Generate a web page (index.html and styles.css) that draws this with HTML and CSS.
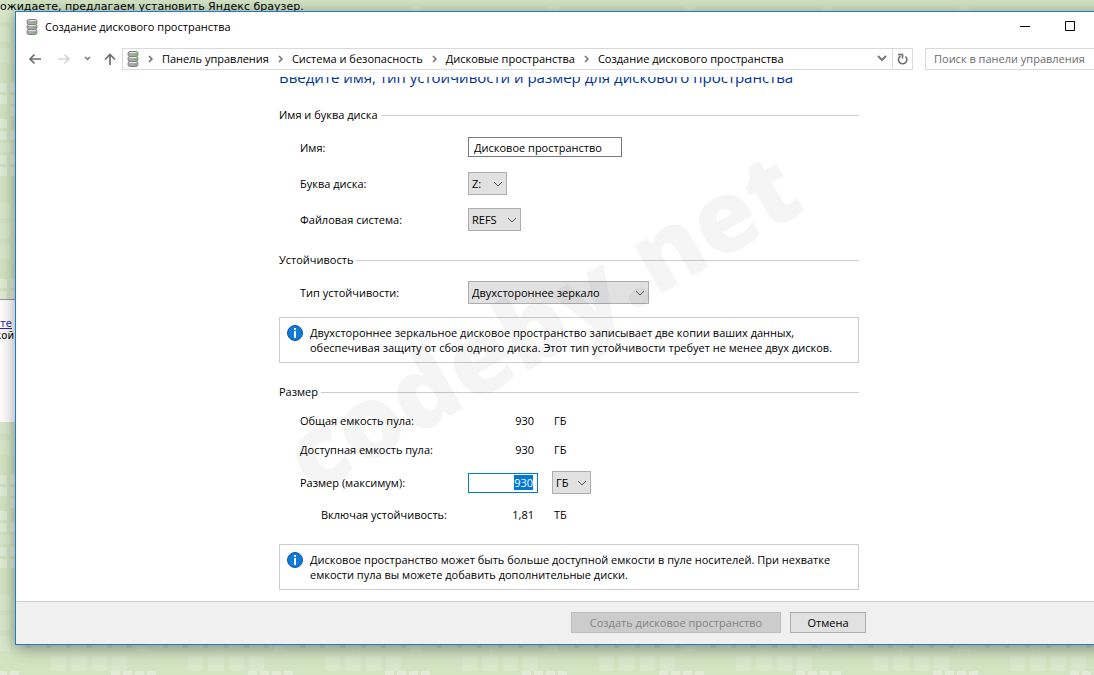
FILE: index.html
```html
<!DOCTYPE html>
<html lang="ru">
<head>
    <meta charset="UTF-8">
    <meta name="viewport" content="width=device-width, initial-scale=1.0">
    <title>Создание дискового пространства</title>
    <link rel="stylesheet" href="styles.css">
</head>
<body>
    <!-- Page behind the window -->
    <svg class="wallpaper" aria-hidden="true">
        <defs>
            <pattern id="tiles" x="0" y="83" width="137" height="196" patternUnits="userSpaceOnUse">
                <rect width="137" height="196" fill="#d3e4c3"/>
                <g fill="#e0ecd6">
                    <path d="M0 0h7v9H0zM10 0h9v9h-9zM111 0h9v9h-9zM123 0h9v9h-9zM135 0h2v9h-2z"/>
                    <path d="M0 12h7v9H0zM10 12h9v9h-9zM10 24h9v9h-9zM0 36h7v9H0zM0 48h7v9H0zM10 48h9v9h-9z"/>
                    <path d="M0 72h7v9H0zM10 72h9v9h-9zM0 84h7v9H0zM10 84h9v9h-9z"/>
                </g>
                <g fill="#d9e8cb">
                    <path d="M0 60h19v9H0zM0 120h10v15H0zM0 140h10v15H0zM0 161h10v15H0z"/>
                    <path d="M51 181h15v15H51zM71 181h16v15H71zM92 181h15v15H92zM112 181h15v15h-15zM79 170h1v26h-1z"/>
                </g>
                <path d="M26 170h5v3h-5zM46 170h5v3h-5zM66 170h5v3h-5zM87 170h5v3h-5zM107 170h5v3h-5zM127 170h5v3h-5z" fill="#c6d8b6"/>
            </pattern>
        </defs>
        <rect width="100%" height="100%" fill="url(#tiles)"/>
    </svg>
    <p class="page-notice">ожидаете, предлагаем установить Яндекс браузер.</p>
    <div class="page-card">
        <a href="#">сте</a>
        <span>кой</span>
    </div>

    <main class="window">
        <header class="titlebar">
            <svg class="disk-icon" width="12" height="16" viewBox="0 0 12 16" aria-hidden="true">
                <g fill="#a9a9a9" stroke="#808080">
                    <rect x="1" y="10.500" width="10" height="5" rx="2"/>
                    <rect x="1" y="5.500" width="10" height="5" rx="2"/>
                    <rect x="1" y="0.500" width="10" height="5" rx="2"/>
                </g>
                <path d="M2.500 1.500h7M2.500 6.500h7M2.500 11.500h7" stroke="#e8e8e8"/>
                <path d="M7.500 3.500h2M7.500 8.500h2M7.500 13.500h2" stroke="#4fc03a"/>
            </svg>
            <h1>Создание дискового пространства</h1>
            <button class="caption-btn" type="button" aria-label="Свернуть">
                <svg width="10" height="10" viewBox="0 0 10 10"><path d="M0 5.500h10" stroke="#000"/></svg>
            </button>
            <button class="caption-btn" type="button" aria-label="Развернуть">
                <svg width="10" height="10" viewBox="0 0 10 10"><path d="M.5.5h9v9h-9z" fill="none" stroke="#000"/></svg>
            </button>
        </header>

        <nav class="navbar">
            <div class="nav-buttons">
                <button type="button" aria-label="Назад">
                    <svg width="14" height="12" viewBox="0 0 14 12"><path d="M13 6H2M6.500 1.500L2 6l4.500 4.500" fill="none" stroke="#6e6e6e" stroke-width="1.700"/></svg>
                </button>
                <button type="button" aria-label="Вперед" disabled>
                    <svg width="14" height="12" viewBox="0 0 14 12"><path d="M1 6h11M7.500 1.500L12 6l-4.500 4.500" fill="none" stroke="#d6d6d6" stroke-width="1.700"/></svg>
                </button>
                <button type="button" aria-label="Последние расположения">
                    <svg width="7" height="12" viewBox="0 0 7 12"><path d="M1 4l2.500 2.500L6 4" fill="none" stroke="#7a7a7a" stroke-width="1.500"/></svg>
                </button>
                <button type="button" aria-label="Вверх">
                    <svg width="12" height="12" viewBox="0 0 12 12"><path d="M6 12V1.500M1 6.500l5-5 5 5" fill="none" stroke="#6e6e6e" stroke-width="1.700"/></svg>
                </button>
            </div>
            <div class="address">
                <svg class="disk-icon" width="12" height="16" viewBox="0 0 12 16" aria-hidden="true">
                    <g fill="#a9a9a9" stroke="#808080">
                        <rect x="1" y="10.500" width="10" height="5" rx="2"/>
                        <rect x="1" y="5.500" width="10" height="5" rx="2"/>
                        <rect x="1" y="0.500" width="10" height="5" rx="2"/>
                    </g>
                    <path d="M2.500 1.500h7M2.500 6.500h7M2.500 11.500h7" stroke="#e8e8e8"/>
                    <path d="M7.500 3.500h2M7.500 8.500h2M7.500 13.500h2" stroke="#4fc03a"/>
                </svg>
                <ol class="crumbs">
                    <li><svg width="5" height="8" viewBox="0 0 5 8"><path d="M1 1l3 3-3 3" fill="none" stroke="#6e6e6e" stroke-width="1.500"/></svg><a href="#">Панель управления</a></li>
                    <li><svg width="5" height="8" viewBox="0 0 5 8"><path d="M1 1l3 3-3 3" fill="none" stroke="#6e6e6e" stroke-width="1.500"/></svg><a href="#">Система и безопасность</a></li>
                    <li><svg width="5" height="8" viewBox="0 0 5 8"><path d="M1 1l3 3-3 3" fill="none" stroke="#6e6e6e" stroke-width="1.500"/></svg><a href="#">Дисковые пространства</a></li>
                    <li><svg width="5" height="8" viewBox="0 0 5 8"><path d="M1 1l3 3-3 3" fill="none" stroke="#6e6e6e" stroke-width="1.500"/></svg><a href="#">Создание дискового пространства</a></li>
                </ol>
                <button class="address-btn" type="button" aria-label="Предыдущие расположения">
                    <svg width="10" height="7" viewBox="0 0 10 7"><path d="M1 1l4 4 4-4" fill="none" stroke="#7a7a7a" stroke-width="2"/></svg>
                </button>
                <button class="address-btn refresh" type="button" aria-label="Обновить">
                    <svg width="11" height="12" viewBox="0 0 11 12"><path d="M8.500 3.500a4.200 4.200 0 1 1-5 -.5M1 1.500h4.500v4" fill="none" stroke="#6e6e6e" stroke-width="1.600"/></svg>
                </button>
            </div>
            <input class="search" type="search" placeholder="Поиск в панели управления" aria-label="Поиск в панели управления">
        </nav>

        <form class="wizard" id="spaceForm">
            <div class="scroll-area">
                <div class="column">
                    <h2>Введите имя, тип устойчивости и размер для дискового пространства</h2>

                    <section class="group">
                        <h3>Имя и буква диска</h3>
                        <div class="row">
                            <label for="name">Имя:</label>
                            <input class="text-input" type="text" id="name" value="Дисковое пространство">
                        </div>
                        <div class="row">
                            <label for="letter">Буква диска:</label>
                            <span class="select short">
                                <select id="letter"><option>Z:</option></select>
                                <svg width="10" height="6" viewBox="0 0 10 6"><path d="M1 1l4 4 4-4" fill="none" stroke="#555"/></svg>
                            </span>
                        </div>
                        <div class="row">
                            <label for="fs">Файловая система:</label>
                            <span class="select medium">
                                <select id="fs"><option>REFS</option></select>
                                <svg width="10" height="6" viewBox="0 0 10 6"><path d="M1 1l4 4 4-4" fill="none" stroke="#555"/></svg>
                            </span>
                        </div>
                    </section>

                    <section class="group">
                        <h3>Устойчивость</h3>
                        <div class="row">
                            <label for="resiliency">Тип устойчивости:</label>
                            <span class="select long">
                                <select id="resiliency"><option>Двухстороннее зеркало</option></select>
                                <svg width="10" height="6" viewBox="0 0 10 6"><path d="M1 1l4 4 4-4" fill="none" stroke="#555"/></svg>
                            </span>
                        </div>
                        <div class="note">
                            <svg width="16" height="16" viewBox="0 0 16 16" aria-hidden="true">
                                <circle cx="8" cy="8" r="7.500" fill="#0f7bd8" stroke="#0a58a5"/>
                                <path d="M7 3h2v2H7zM7 6h2v7H7z" fill="#fff"/>
                            </svg>
                            <p>Двухстороннее зеркальное дисковое пространство записывает две копии ваших данных,<br>обеспечивая защиту от сбоя одного диска. Этот тип устойчивости требует не менее двух дисков.</p>
                        </div>
                    </section>

                    <section class="group">
                        <h3>Размер</h3>
                        <div class="row">
                            <span>Общая емкость пула:</span>
                            <span class="value">930</span>
                            <span class="unit">ГБ</span>
                        </div>
                        <div class="row">
                            <span>Доступная емкость пула:</span>
                            <span class="value">930</span>
                            <span class="unit">ГБ</span>
                        </div>
                        <div class="row">
                            <label for="size">Размер (максимум):</label>
                            <input class="size-input" type="text" id="size" value="930">
                            <span class="select short">
                                <select id="unit" aria-label="Единица размера"><option>ГБ</option></select>
                                <svg width="10" height="6" viewBox="0 0 10 6"><path d="M1 1l4 4 4-4" fill="none" stroke="#555"/></svg>
                            </span>
                        </div>
                        <div class="row">
                            <span class="indent">Включая устойчивость:</span>
                            <span class="value">1,81</span>
                            <span class="unit">ТБ</span>
                        </div>
                    </section>

                    <div class="note">
                        <svg width="16" height="16" viewBox="0 0 16 16" aria-hidden="true">
                            <circle cx="8" cy="8" r="7.500" fill="#0f7bd8" stroke="#0a58a5"/>
                            <path d="M7 3h2v2H7zM7 6h2v7H7z" fill="#fff"/>
                        </svg>
                        <p>Дисковое пространство может быть больше доступной емкости в пуле носителей. При нехватке<br>емкости пула вы можете добавить дополнительные диски.</p>
                    </div>

                    <span class="watermark">codeby.net</span>
                </div>
            </div>
            <footer class="actions">
                <div class="actions-inner">
                    <button class="create-btn" type="submit" disabled>Создать дисковое пространство</button>
                    <button class="cancel-btn" type="button">Отмена</button>
                </div>
            </footer>
        </form>
    </main>

    <script>
        // Select the suggested size so it can be typed over
        const sizeInput = document.getElementById("size");
        sizeInput.focus();
        sizeInput.select();
    </script>
</body>
</html>
```

FILE: styles.css
```css
* {
    box-sizing: border-box;
}
body {
    font-family: "Open Sans", "Noto Sans", sans-serif;
    font-size: 11px;
    line-height: 16px;
    color: #000;
    margin: 0;
    height: 100vh;
    position: relative;
    overflow: hidden;
}
h1, h2, h3, p, ol {
    margin: 0;
    padding: 0;
    font-size: 11px;
    font-weight: normal;
}
button, input, select {
    font: inherit;
    color: inherit;
    margin: 0;
}
button {
    padding: 0;
    border: none;
    background: none;
}

/* Page behind the window */
.wallpaper {
    position: absolute;
    width: 100%;
    height: 100%;
}
.page-notice {
    position: absolute;
    top: 0;
    left: 0;
    font-family: "DejaVu Sans", sans-serif;
    font-size: 11px;
    line-height: 13px;
}
.page-card {
    position: absolute;
    top: 299px;
    left: 0;
    width: 40px;
    height: 123px;
    padding-top: 18px;
    border-top: 1px solid #9a9a9a;
    background-color: #fff;
    font-family: "DejaVu Sans", sans-serif;
    font-size: 10px;
    line-height: 12px;
}
.page-card a, .page-card span {
    display: flex;
    justify-content: flex-end;
    width: 14px;
}
.page-card a {
    width: 12px;
    color: #2b2b9c;
}

/* Window, its right edge runs off the screen */
.window {
    position: absolute;
    top: 11px;
    right: -29px;
    bottom: 30px;
    left: 15px;
    display: flex;
    flex-direction: column;
    border: 1px solid #1a7fd0;
    background-color: #fff;
    box-shadow: 0 3px 16px rgba(0, 0, 0, 0.4);
}
.titlebar {
    display: flex;
    align-items: center;
    height: 30px;
    padding: 0 30px 0 10px;
}
.titlebar h1 {
    flex: 1;
    margin-left: 7px;
}
.caption-btn {
    width: 45px;
    height: 30px;
}
.disk-icon {
    flex: none;
}

.navbar {
    display: flex;
    align-items: center;
    height: 35px;
    padding: 3px 0 5px 12px;
}
.nav-buttons {
    display: flex;
    align-items: center;
    gap: 13px;
    width: 94px;
}
.nav-buttons button {
    display: flex;
}
.nav-buttons button:first-child {
    margin-right: 2px;
}
.address {
    display: flex;
    align-items: center;
    flex: 1;
    height: 22px;
    padding-left: 4px;
    border: 1px solid #d9d9d9;
}
.crumbs {
    display: flex;
    flex: 1;
    list-style: none;
}
.crumbs li {
    display: flex;
    align-items: center;
}
.crumbs svg {
    margin: 0 9px;
}
.crumbs a {
    color: #000;
    text-decoration: none;
}
.address-btn {
    display: flex;
    align-items: center;
    justify-content: center;
    width: 20px;
    height: 20px;
}
.refresh {
    border-left: 1px solid #d9d9d9;
}
.search {
    width: 197px;
    height: 22px;
    margin-left: 12px;
    padding: 0 8px;
    border: 1px solid #d9d9d9;
    background-color: #fff;
    outline: none;
}
.search::placeholder {
    color: #6d6d6d;
}

/* Wizard */
.wizard {
    display: flex;
    flex: 1;
    flex-direction: column;
    min-height: 0;
}
.scroll-area {
    flex: 1;
    min-height: 0;
    overflow: hidden;
}
.column {
    display: flex;
    flex-direction: column;
    gap: 21px;
    position: relative;
    max-width: 580px;
    margin: -9px auto 0;
}
h2 {
    font-size: 15px;
    line-height: 18px;
    color: #003399;
    white-space: nowrap;
}
.group {
    display: flex;
    flex-direction: column;
    gap: 13px;
}
h3 {
    display: flex;
    align-items: center;
    gap: 3px;
}
h3::after {
    content: "";
    flex: 1;
    height: 1px;
    background-color: #ccc;
}
.row {
    display: grid;
    grid-template-columns: 168px auto auto;
    justify-content: start;
    align-items: center;
    padding-left: 21px;
}
.indent {
    padding-left: 21px;
}
.value {
    width: 66px;
    text-align: right;
}
.unit {
    margin-left: 20px;
}
.text-input, .size-input {
    height: 20px;
    border: 1px solid #7a7a7a;
    background-color: #fff;
    outline: none;
}
.text-input {
    width: 154px;
    margin: 1px 0 2px;
    padding: 0 5px;
}
.size-input {
    width: 70px;
    margin-right: 14px;
    padding: 0 4px;
    border-color: #0078d7;
    text-align: right;
}
.size-input::selection {
    background-color: #0078d7;
    color: #fff;
}
.select {
    display: grid;
    align-items: center;
    height: 23px;
}
.select select, .select svg {
    grid-area: 1 / 1;
}
.select select {
    appearance: none;
    width: 100%;
    height: 23px;
    padding: 0 3px;
    border: 1px solid #adadad;
    border-radius: 0;
    background-color: #e1e1e1;
}
.select svg {
    justify-self: end;
    margin-right: 4px;
    pointer-events: none;
}
.short {
    width: 39px;
}
.medium {
    width: 53px;
}
.long {
    width: 181px;
}
.note {
    display: flex;
    gap: 7px;
    padding: 7px;
    border: 1px solid #ccc;
    line-height: 15px;
}
.note svg {
    flex: none;
}
.watermark {
    position: absolute;
    top: 48%;
    left: 45%;
    transform: translate(-50%, -50%) rotate(-30deg);
    font-size: 100px;
    font-weight: 800;
    line-height: 1;
    color: rgba(0, 0, 0, 0.04);
    pointer-events: none;
}

.actions {
    height: 43px;
    padding: 10px 0;
    border-top: 1px solid #ccc;
    background-color: #f0f0f0;
}
.actions-inner {
    display: flex;
    justify-content: flex-end;
    gap: 9px;
    max-width: 594px;
    margin: 0 auto;
}
.create-btn, .cancel-btn {
    height: 21px;
    border: 1px solid #adadad;
    background-color: #e1e1e1;
}
.create-btn {
    width: 210px;
    border-color: #bfbfbf;
    background-color: #ccc;
    color: #838383;
}
.cancel-btn {
    width: 76px;
}
```
